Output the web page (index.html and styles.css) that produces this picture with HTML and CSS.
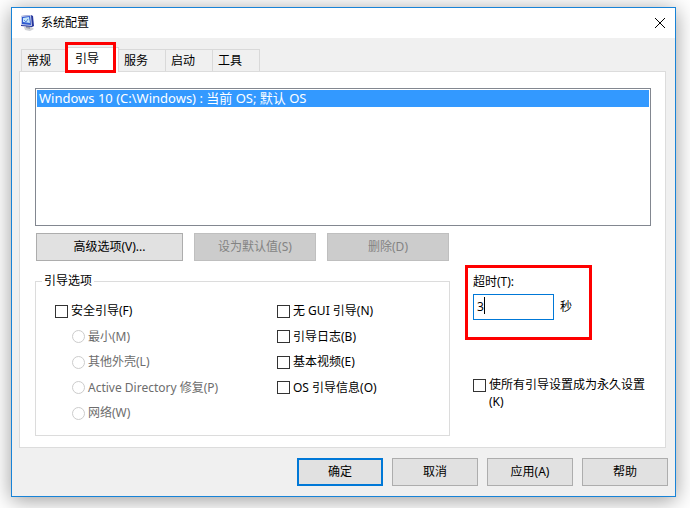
FILE: index.html
```
<!DOCTYPE html>
<html lang="zh-CN">
<head>
  <meta charset="UTF-8" />
  <meta name="viewport" content="width=device-width, initial-scale=1.0"/>
  <title>系统配置</title>
  <link rel="stylesheet" href="styles.css">
</head>
<body>
  <div class="window">
    <header class="title-bar">
      <svg class="app-icon" width="16" height="16" viewBox="0 0 16 16">
        <path d="M4 12l6-1 4 3-4 2-5-1z" fill="#cfd1d6"/>
        <path d="M6 11l4 1v2l-4-1z" fill="#9a9eaa"/>
        <path d="M1 1l10-1 2 1 1 10-2 1L1 11z" fill="#26369c"/>
        <path d="M1 1l10-1 1 11L1 10z" fill="#c3cbea"/>
        <path d="M2 2l8-1 1 9-9-1z" fill="#2f5ad0"/>
        <path d="M3 3l6-1 1 6-7-1z" fill="#c4e6fb"/>
        <path d="M4 5l2 2 2-3" fill="none" stroke="#5a86d8"/>
      </svg>
      <h1 class="title">系统配置</h1>
      <button class="close-button" aria-label="关闭">
        <svg width="12" height="12" viewBox="0 0 12 12">
          <path d="M1 1l10 10M11 1L1 11" stroke="#000"/>
        </svg>
      </button>
    </header>

    <nav class="tabs" role="tablist">
      <button class="tab" role="tab">常规</button>
      <button class="tab active" role="tab" aria-selected="true">引导</button>
      <button class="tab" role="tab">服务</button>
      <button class="tab" role="tab">启动</button>
      <button class="tab" role="tab">工具</button>
    </nav>

    <main class="panel">
      <ul class="os-list" role="listbox" aria-label="操作系统">
        <li class="os-item" role="option" aria-selected="true">Windows 10 (C:\Windows) : 当前 OS; 默认 OS</li>
      </ul>

      <div class="list-buttons">
        <button class="btn wide">高级选项(V)...</button>
        <button class="btn" disabled>设为默认值(S)</button>
        <button class="btn" disabled>删除(D)</button>
      </div>

      <div class="settings">
        <fieldset class="boot-options">
          <legend>引导选项</legend>
          <div class="options">
            <div class="column">
              <label class="option"><input type="checkbox" id="safeBoot" />安全引导(F)</label>
              <label class="option sub"><input type="radio" name="safe" disabled />最小(M)</label>
              <label class="option sub"><input type="radio" name="safe" disabled />其他外壳(L)</label>
              <label class="option sub"><input type="radio" name="safe" disabled />Active Directory 修复(P)</label>
              <label class="option sub"><input type="radio" name="safe" disabled />网络(W)</label>
            </div>
            <div class="column">
              <label class="option"><input type="checkbox" />无 GUI 引导(N)</label>
              <label class="option"><input type="checkbox" />引导日志(B)</label>
              <label class="option"><input type="checkbox" />基本视频(E)</label>
              <label class="option"><input type="checkbox" />OS 引导信息(O)</label>
            </div>
          </div>
        </fieldset>

        <div class="side">
          <div class="timeout">
            <label for="timeout">超时(T):</label>
            <div class="timeout-row">
              <span class="field"><input type="text" id="timeout" value="3" /></span>
              <span>秒</span>
            </div>
          </div>
          <label class="permanent"><input type="checkbox" /><span>使所有引导设置成为永久设置(K)</span></label>
        </div>
      </div>
    </main>

    <footer class="actions">
      <button class="btn default">确定</button>
      <button class="btn">取消</button>
      <button class="btn">应用(A)</button>
      <button class="btn">帮助</button>
    </footer>
  </div>

  <script>
    // 只有勾选安全引导后才能选择模式
    const safeBoot = document.getElementById('safeBoot');
    safeBoot.addEventListener('change', () => {
      document.querySelectorAll('input[name="safe"]').forEach(radio => {
        radio.disabled = !safeBoot.checked;
      });
    });
  </script>
</body>
</html>
```
FILE: styles.css
```
* { box-sizing: border-box; }
body {
  font-family: "Noto Sans", "Noto Sans CJK SC", sans-serif;
  font-size: 12px;
  line-height: 16px;
  color: #000;
  margin: 0;
  padding: 7px 14px 11px 11px;
  background-color: #fff;
}
button, input {
  font: inherit;
  color: inherit;
}
.window {
  background-color: #f0f0f0;
  border: 1px solid #1883d7;
  box-shadow: 0 3px 20px rgba(0,0,0,0.4);
}
.title-bar {
  display: flex;
  align-items: center;
  height: 30px;
  padding: 0 9px 0 8px;
  background-color: #fff;
}
.title {
  flex: 1;
  margin: 0 0 0 5px;
  font-size: 12px;
  font-weight: normal;
}
.close-button {
  display: flex;
  padding: 0;
  background: none;
  border: none;
}
.tabs {
  display: flex;
  align-items: flex-end;
  height: 33px;
  padding-left: 9px;
}
.tab {
  width: 47px;
  height: 22px;
  padding: 0 0 0 5px;
  text-align: left;
  background-color: #f0f0f0;
  border: 1px solid #d9d9d9;
  border-width: 1px 1px 0 0;
}
.tab:first-child {
  border-left-width: 1px;
}
.tab.active {
  position: relative;
  width: 53px;
  height: 25px;
  margin-left: -2px;
  margin-bottom: -1px;
  padding: 0 0 3px 9px;
  background-color: #fff;
}
/* 当前选项卡的红色标记 */
.tab.active::after {
  content: "";
  position: absolute;
  inset: -6px 2px -1px -1px;
  border: 3px solid #fe0000;
}
.panel {
  margin: 0 9px 0 7px;
  padding: 16px 14px 11px 15px;
  background-color: #fff;
  border: 1px solid #dcdcdc;
}
.os-list {
  height: 138px;
  margin: 0;
  padding: 1px;
  list-style: none;
  border: 1px solid #828790;
}
.os-item {
  padding: 0 2px;
  font-size: 13px;
  line-height: 17px;
  color: #fff;
  background-color: #3399ff;
}
.list-buttons {
  display: flex;
  gap: 11px;
  margin: 7px 1px 12px;
}
.btn {
  width: 122px;
  height: 28px;
  padding: 0;
  background-color: #e1e1e1;
  border: 1px solid #adadad;
}
.btn.wide {
  width: 147px;
}
.btn:disabled {
  color: #838383;
  background-color: #cccccc;
  border-color: #bfbfbf;
}
.settings {
  display: flex;
  gap: 15px;
  align-items: flex-start;
}
.boot-options {
  flex: 0 1 415px;
  margin: 0;
  padding: 9px 19px 9px;
  border: 1px solid #dcdcdc;
}
.boot-options legend {
  margin-left: -13px;
  padding: 0 2px;
}
.options {
  display: grid;
  grid-template-columns: 222px 1fr;
}
.column {
  display: grid;
  grid-template-rows: repeat(2, 26px 25px) 26px;
}
.option {
  display: flex;
  align-items: center;
  gap: 3px;
}
.option.sub {
  padding-left: 17px;
}
.option:has(:disabled) {
  color: #6d6d6d;
}
input[type="checkbox"], input[type="radio"] {
  appearance: none;
  flex: none;
  width: 13px;
  height: 13px;
  margin: 0;
  background-color: #fff;
  border: 1px solid #333;
}
input[type="checkbox"]:checked {
  background-color: #333;
  box-shadow: inset 0 0 0 2px #fff;
}
input[type="radio"] {
  border-radius: 50%;
}
input[type="radio"]:checked {
  background-color: #333;
  box-shadow: inset 0 0 0 3px #fff;
}
input[type="radio"]:disabled {
  border-color: #cccccc;
}
.side {
  flex: 1;
}
.timeout {
  width: 127px;
  height: 75px;
  margin-top: -8px;
  padding: 6px 5px;
  border: 3px solid #fe0000;
}
.timeout-row {
  display: flex;
  align-items: center;
  gap: 6px;
  margin-top: 4px;
}
.field {
  position: relative;
}
.field input {
  display: block;
  width: 81px;
  height: 26px;
  padding: 0 3px 2px;
  background-color: #fff;
  border: 1px solid #0078d7;
  outline: none;
}
/* 文本光标 */
.field::after {
  content: "";
  position: absolute;
  top: 3px;
  left: 11px;
  width: 1px;
  height: 17px;
  background-color: #000;
}
.permanent {
  display: flex;
  gap: 3px;
  margin: 36px 0 0 8px;
  line-height: 17px;
}
.permanent input {
  margin-top: 3px;
}
.permanent span {
  max-width: 160px;
}
.actions {
  display: flex;
  justify-content: flex-end;
  gap: 9px;
  padding: 10px 7px;
}
.actions .btn {
  width: 86px;
}
.btn.default {
  border: 2px solid #0078d7;
}
```
